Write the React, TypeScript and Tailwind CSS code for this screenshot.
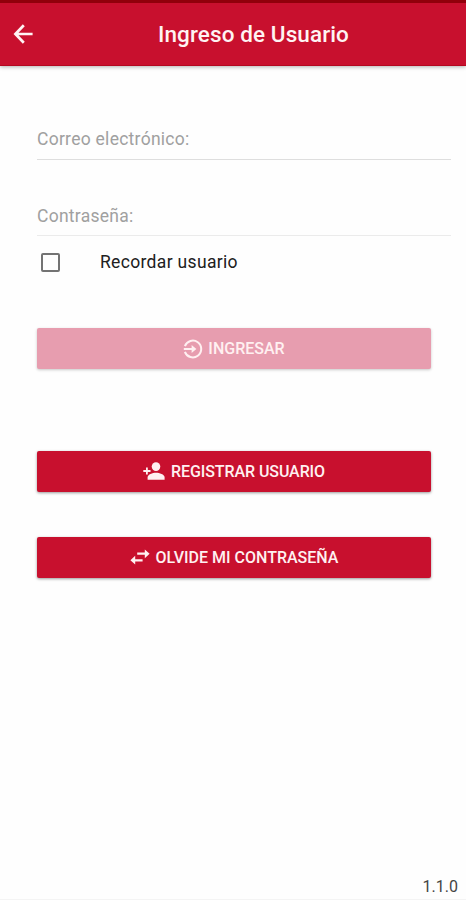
import React, { useState } from "react";

interface ActionButtonProps {
  id: string;
  label: string;
  icon: React.ReactNode;
  className: string;
  labelClassName: string;
  disabled?: boolean;
}

function BackIcon() {
  return (
    <svg viewBox="0 0 20 20" className="h-5 w-5" fill="none" stroke="currentColor" strokeWidth="2.7">
      <path d="M19.6 10H2.6M10.8 1.2L2.4 10l8.4 8.8" />
    </svg>
  );
}

function LoginIcon() {
  return (
    <svg viewBox="0 0 20 20" className="h-5 w-5 shrink-0" fill="none" stroke="currentColor" strokeWidth="2">
      <path d="M1.9 7.2a8.4 8.4 0 1 1 0 5.6" />
      <path d="M.8 10h9" />
      <path d="M8.6 6l4.8 4-4.8 4z" fill="currentColor" stroke="none" />
    </svg>
  );
}

function PersonAddIcon() {
  return (
    <svg viewBox="0 0 22 18" className="-mt-0.5 h-[18px] w-[22px] shrink-0" fill="currentColor">
      <circle cx="13" cy="4.6" r="4.3" />
      <path d="M4.6 17.8v-2.4c0-2.9 5-4.6 8.4-4.6s8.6 1.7 8.6 4.6v2.4z" />
      <path d="M3 5.6h1.8v2.5h2.7v1.8H4.8v2.6H3V9.900H.3V8.100H3z" />
    </svg>
  );
}

function SwapIcon() {
  return (
    <svg viewBox="0 0 20 16" className="-mt-0.5 h-4 w-5 shrink-0" fill="currentColor">
      <path d="M7.2 3.6h7.6V.4l4.8 4.4-4.8 4.4V5.800H7.2z" />
      <path d="M12.6 10.2H5.2V6.8L.4 11.2l4.8 4.4v-3.2h7.4z" />
    </svg>
  );
}

function ActionButton({ id, label, icon, className, labelClassName, disabled }: ActionButtonProps) {
  return (
    <button
      id={id}
      type="button"
      disabled={disabled}
      className={`flex h-[41px] w-[394px] items-center justify-center rounded-xs font-medium text-[#fff0f1] ${className}`}
    >
      {icon}
      <span className={`whitespace-nowrap text-base leading-5 ${labelClassName}`}>{label}</span>
    </button>
  );
}

export default function App() {
  const [email, setEmail] = useState("");
  const [password, setPassword] = useState("");
  const [remember, setRemember] = useState(false);

  return (
    <div className="flex h-[900px] w-[466px] flex-col border-b border-[#f4f4f4] bg-[#fefefe] font-['Roboto',sans-serif]">
      {/* Header */}
      <header className="flex h-[66px] shrink-0 items-center border-t-3 border-b border-t-[#91000b] border-b-[#b40820] bg-[#c8102e] pl-[13px] text-[#fff3f3] shadow-[0_1px_4px_rgba(0,0,0,0.3)]">
        <button id="back-btn" type="button" aria-label="Volver" className="w-5">
          <BackIcon />
        </button>
        <h1 className="-mt-px ml-[125px] whitespace-nowrap text-[22.5px] font-medium leading-7 tracking-[0.1px]">
          Ingreso de Usuario
        </h1>
      </header>

      {/* Login form */}
      <main className="flex flex-1 flex-col pl-[37px]">
        <input
          id="email-input"
          type="email"
          placeholder="Correo electrónico:"
          value={email}
          onChange={(e) => setEmail(e.target.value)}
          className="mt-[52px] h-[42px] w-[414px] border-b border-[#dedede] text-[17.5px] tracking-[0.27px] text-black outline-none placeholder:text-[#a0a0a0]"
        />
        <input
          id="password-input"
          type="password"
          placeholder="Contraseña:"
          value={password}
          onChange={(e) => setPassword(e.target.value)}
          className="mt-[35px] h-[41px] w-[414px] border-b border-[#ebebeb] pt-0.5 text-[17.5px] tracking-[0.27px] text-black outline-none placeholder:text-[#a0a0a0]"
        />
        <label className="mt-[14px] flex h-6 items-center pl-1">
          <input
            id="remember-checkbox"
            type="checkbox"
            checked={remember}
            onChange={(e) => setRemember(e.target.checked)}
            className="h-[19px] w-[19px] appearance-none rounded-xs border-2 border-[#737373] checked:bg-[#c8102e]"
          />
          <span className="ml-10 whitespace-nowrap text-[17.5px] leading-6 tracking-[0.33px] text-[#202020]">
            Recordar usuario
          </span>
        </label>

        <ActionButton
          id="login-btn"
          label="INGRESAR"
          icon={<LoginIcon />}
          disabled
          className="mt-[54px] bg-[#e79daf] shadow-[0_1px_3px_rgba(0,0,0,0.22)]"
          labelClassName="ml-[5px]"
        />
        <ActionButton
          id="register-btn"
          label="REGISTRAR USUARIO"
          icon={<PersonAddIcon />}
          className="mt-[82px] bg-[#c8102e] shadow-[0_1px_3px_rgba(0,0,0,0.4)]"
          labelClassName="ml-[6px] tracking-[-0.08px]"
        />
        <ActionButton
          id="forgot-btn"
          label="OLVIDE MI CONTRASEÑA"
          icon={<SwapIcon />}
          className="mt-[45px] bg-[#c8102e] shadow-[0_1px_3px_rgba(0,0,0,0.4)]"
          labelClassName="ml-[6px]"
        />
      </main>

      {/* App version */}
      <footer className="mb-0.5 flex justify-end pr-2 text-base leading-5 text-[#444444]">1.1.0</footer>
    </div>
  );
}
